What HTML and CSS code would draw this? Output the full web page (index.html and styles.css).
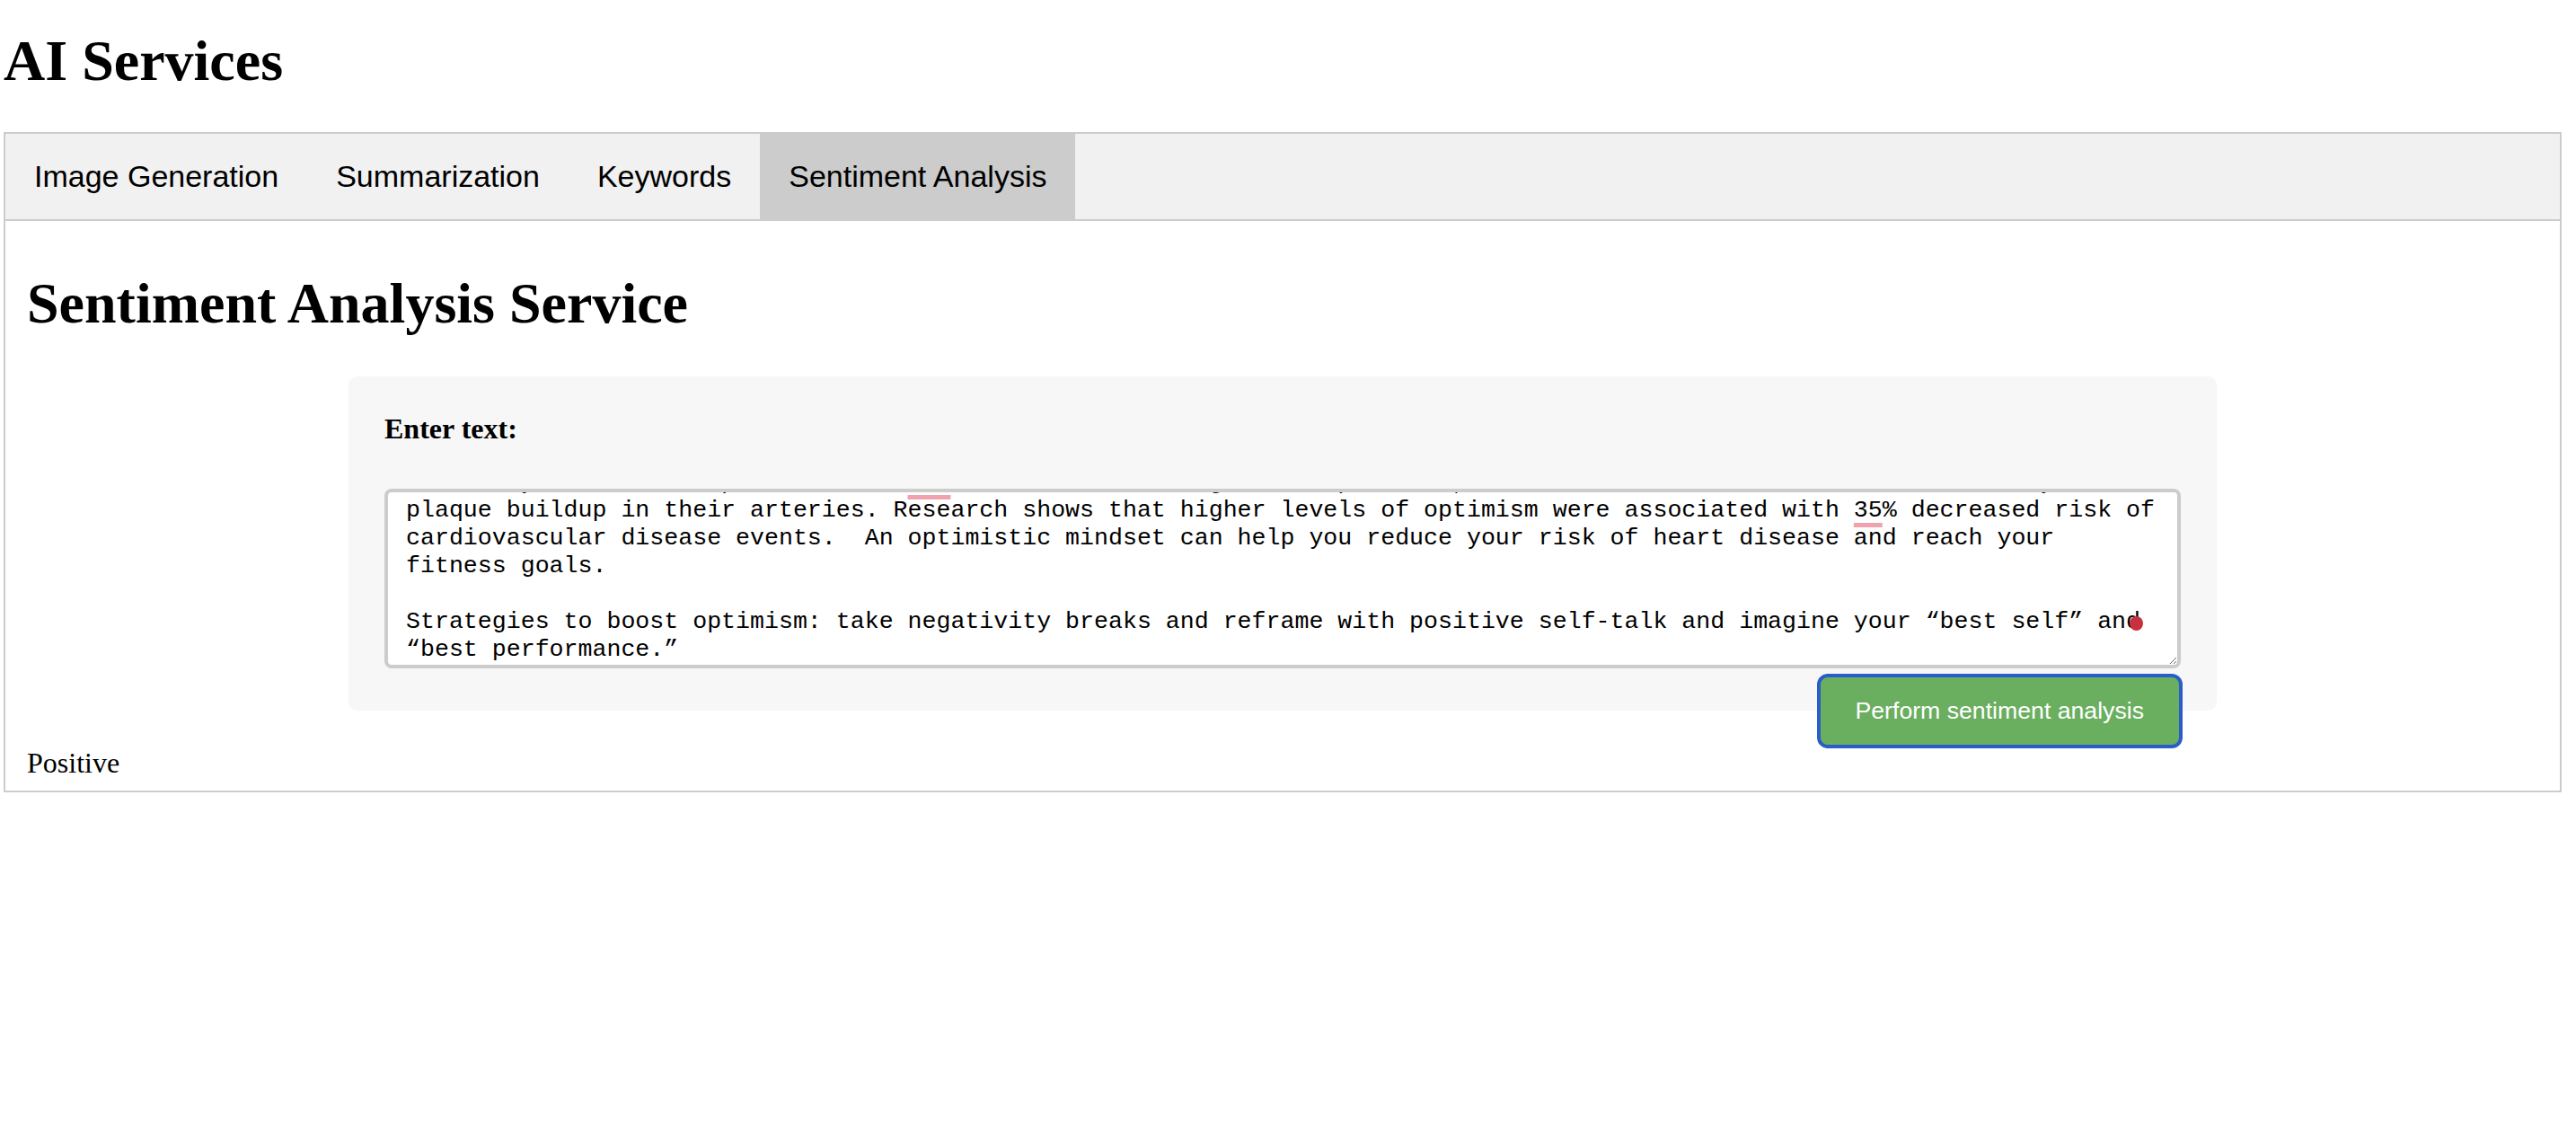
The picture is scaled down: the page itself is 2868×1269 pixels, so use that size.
FILE: index.html
```html
<!DOCTYPE html>
<html lang="en">
<head>
<meta charset="utf-8">
<title>AI Services</title>
<link rel="stylesheet" href="styles.css">
</head>
<body>
<h1 class="page-title">AI Services</h1>
<div class="tabs">
  <button class="tab">Image Generation</button>
  <button class="tab">Summarization</button>
  <button class="tab">Keywords</button>
  <button class="tab active">Sentiment Analysis</button>
</div>
<div class="tab-content">
  <h2 class="service-title">Sentiment Analysis Service</h2>
  <div class="form-card">
    <label class="field-label" for="text">Enter text:</label>
    <div class="field">
      <div class="textbox" id="text">Optimism and Heart Health

One study found that optimists had <span class="mark">50%</span> lower rates of high blood pressure, better cholesterol levels and noticeably less plaque buildup in their arteries. Research shows that higher levels of optimism were associated with <span class="mark">35</span>% decreased risk of cardiovascular disease events.  An optimistic mindset can help you reduce your risk of heart disease and reach your fitness goals.

Strategies to boost optimism: take negativity breaks and reframe with positive self-talk and imagine your “best self” and “best performance.”</div>
      <span class="cursor-dot"></span>
    </div>
    <button class="submit">Perform sentiment analysis</button>
  </div>
  <div class="result">Positive</div>
</div>
<script src="script.js"></script>
</body>
</html>
```

FILE: styles.css
```css
html, body {
  background: #fff;
}
body {
  margin: 0 16px 0 4px;
  font-family: "Liberation Serif", "Times New Roman", serif;
  font-size: 32px;
  color: #000;
}
.page-title {
  font-size: 64px;
  font-weight: bold;
  line-height: normal;
  margin: 31px 0 42px 0;
}
.tabs {
  display: flex;
  border: 2px solid #ccc;
  background: #f1f1f1;
}
.tab {
  font-family: "Liberation Sans", Arial, sans-serif;
  font-size: 34px;
  line-height: normal;
  color: #000;
  background: inherit;
  border: none;
  outline: none;
  padding: 28px 32px;
  margin: 0;
}
.tab.active {
  background: #ccc;
}
.tab-content {
  padding: 12px 24px;
  border: 2px solid #ccc;
  border-top: none;
}
.service-title {
  font-size: 64px;
  font-weight: bold;
  line-height: normal;
  margin: 43px 0 44px 0;
}
.form-card {
  width: fit-content;
  margin: 0 auto;
  padding: 40px 40px 47px 40px;
  background: #f7f7f7;
  border-radius: 10px;
}
.field-label {
  display: block;
  font-weight: bold;
  font-size: 32px;
  line-height: normal;
  margin-bottom: 48px;
}
.field {
  position: relative;
  width: 2000px;
}
.textbox {
  box-sizing: border-box;
  width: 2000px;
  height: 200px;
  border: 4px solid #ccc;
  border-radius: 8px;
  padding: 20px;
  background: #fff;
  font-family: "Liberation Mono", "Courier New", monospace;
  font-size: 26.6px;
  line-height: 31px;
  white-space: pre-wrap;
  overflow-wrap: break-word;
  overflow: hidden;
  resize: both;
}
.mark {
  text-decoration: underline;
  text-decoration-color: #f0a3ad;
  text-decoration-thickness: 5px;
  text-underline-offset: 7px;
}
.cursor-dot {
  position: absolute;
  left: 1943px;
  top: 142px;
  width: 15px;
  height: 16px;
  border-radius: 50%;
  background: #c9303e;
}
.submit {
  float: right;
  margin: 6px -2px 0 0;
  padding: 22px 39px;
  border: 4px solid #2a5dc8;
  border-radius: 12px;
  background: #6aae5f;
  color: #fff;
  font-family: "Liberation Sans", Arial, sans-serif;
  font-size: 26.67px;
  line-height: normal;
}
.result {
  margin-top: 40px;
  font-size: 32px;
  line-height: normal;
}
```

FILE: script.js
```js
document.getElementById('text').scrollTop = 108;
```
